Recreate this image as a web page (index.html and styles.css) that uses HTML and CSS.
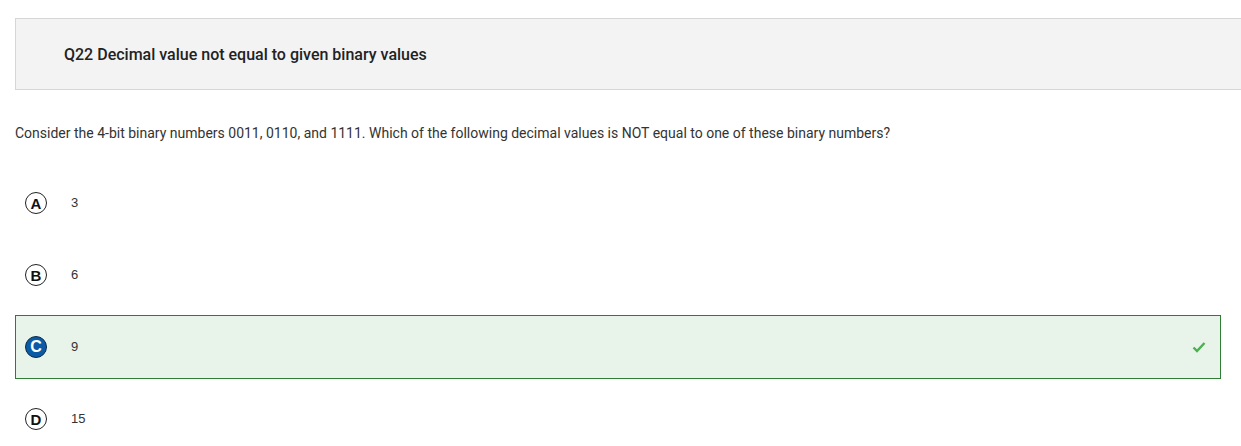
FILE: index.html
```html
<!DOCTYPE html>
<html>
<head>
<meta charset="utf-8">
<link rel="stylesheet" href="styles.css">
</head>
<body>
<div class="page">
  <div class="qhead"><h2 class="qtitle">Q22 Decimal value not equal to given binary values</h2></div>
  <p class="qtext">Consider the 4-bit binary numbers 0011, 0110, and 1111. Which of the following decimal values is NOT equal to one of these binary numbers?</p>
  <div class="options">
    <div class="opt"><span class="badge">A</span><span class="val">3</span></div>
    <div class="opt"><span class="badge">B</span><span class="val">6</span></div>
    <div class="opt correct"><span class="badge filled">C</span><span class="val">9</span>
      <svg class="check" width="14" height="12" viewBox="0 0 14 12"><path d="M1.5 6.5 L5 10 L12.5 2" fill="none" stroke="#4caf50" stroke-width="2.4"/></svg>
    </div>
    <div class="opt"><span class="badge">D</span><span class="val">15</span></div>
  </div>
</div>
</body>
</html>
```
FILE: styles.css
```css
html, body { margin: 0; padding: 0; background: #fff; overflow: hidden; }
.page { padding: 18px 0 0 15px; }
.qhead {
  background: #f3f3f3;
  border: 1px solid #d6d6d6;
  border-right: none;
  height: 70px;
  display: flex;
  align-items: center;
}
.qtitle {
  margin: 0 0 0 48px;
  font-family: Roboto, "Liberation Sans", sans-serif;
  font-weight: 500;
  font-size: 16px;
  color: #222;
}
.qtext {
  margin: 33px 0 27px 0;
  font-family: Roboto, "Liberation Sans", sans-serif;
  font-size: 14px;
  line-height: 21px;
  color: #333;
}
.options { display: flex; flex-direction: column; gap: 8px; width: 1206px; }
.opt {
  height: 62px;
  border: 1px solid transparent;
  display: flex;
  align-items: center;
  padding-left: 9px;
  font-family: "Liberation Sans", Arial, sans-serif;
  font-size: 13px;
  color: #333;
}
.opt.correct { background: #e8f3ea; border-color: #2e7d32; }
.badge {
  box-sizing: border-box;
  width: 22px; height: 22px;
  border: 1.5px solid #222;
  border-radius: 50%;
  display: flex; align-items: center; justify-content: center;
  font-weight: bold;
  font-size: 15px;
  color: #111;
}
.badge.filled { background: #0b5aa6; border-color: #0a2b4a; color: #fff; font-size: 16px; }
.val { margin-left: 24px; margin-top: -1px; }
.check { margin-left: auto; margin-right: 14px; }
```
